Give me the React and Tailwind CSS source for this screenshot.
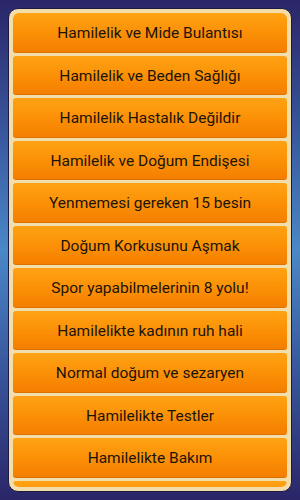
import React from 'react';

const items = [
    'Hamilelik ve Mide Bulantısı',
    'Hamilelik ve Beden Sağlığı',
    'Hamilelik Hastalık Değildir',
    'Hamilelik ve Doğum Endişesi',
    'Yenmemesi gereken 15 besin',
    'Doğum Korkusunu Aşmak',
    'Spor yapabilmelerinin 8 yolu!',
    'Hamilelikte kadının ruh hali',
    'Normal doğum ve sezaryen',
    'Hamilelikte Testler',
    'Hamilelikte Bakım',
    '',
];

const App = () => {
    return (
        <div
            className="w-[300px] h-[500px] p-[8px] bg-[linear-gradient(180deg,#2a2668_0%,#3a5aa0_28%,#4a88c8_50%,#3a5aa0_72%,#2a2668_100%)]"
            style={{ fontFamily: 'Roboto, "Noto Sans", sans-serif' }}
        >
            <div className="h-full rounded-[10px] border border-[#1c1a40] bg-[#f3ddab] p-[4px] overflow-hidden">
                <div className="h-full overflow-hidden rounded-[6px] flex flex-col gap-[3px]">
                    {items.map((label, i) => (
                        <button
                            key={i}
                            className="shrink-0 h-[39.5px] w-full rounded-[3px] border-b border-[#d97200] bg-[linear-gradient(180deg,#ffa214_0%,#fb8f06_55%,#f47e00_100%)] text-[#1b1408] text-[15.5px] pt-[3px] flex items-center justify-center"
                        >
                            {label}
                        </button>
                    ))}
                </div>
            </div>
        </div>
    );
};

export default App;
